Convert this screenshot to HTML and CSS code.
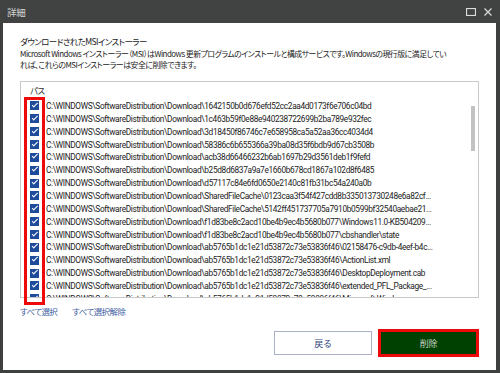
FILE: index.html
```html
<!DOCTYPE html>
<html lang="ja">
<head>
<meta charset="utf-8">
<link rel="stylesheet" href="styles.css">
</head>
<body>
<div class="window">
  <div class="titlebar">
    <span class="title">詳細</span>
    <span class="controls">
      <svg class="ico" width="10" height="8" viewBox="0 0 10 8"><rect x="0.5" y="0.5" width="9" height="7" fill="none" stroke="#dcdcdc" stroke-width="1.2"/></svg>
      <svg class="ico" width="8" height="8" viewBox="0 0 8 8"><path d="M0.5 0.5L7.5 7.5M7.5 0.5L0.5 7.5" stroke="#dcdcdc" stroke-width="1.2"/></svg>
    </span>
  </div>
  <div class="content">
    <p class="text">ダウンロードされたMSIインストーラー</p>
    <p class="text desc">Microsoft Windows インストーラー（MSI）はWindows 更新プログラムのインストールと構成サービスです。Windowsの現行版に満足してい<br>れば、これらのMSIインストーラーは安全に削除できます。</p>
    <div class="listbox">
      <div class="list">
        <div class="head">パス</div>
        <div class="row"><span class="cb"></span><span class="path">C:\WINDOWS\SoftwareDistribution\Download\1642150b0d676efd52cc2aa4d0173f6e706c04bd</span></div>
        <div class="row"><span class="cb"></span><span class="path">C:\WINDOWS\SoftwareDistribution\Download\1c463b59f0e88e940238722699b2ba789e932fec</span></div>
        <div class="row"><span class="cb"></span><span class="path">C:\WINDOWS\SoftwareDistribution\Download\3d18450f86746c7e658958ca5a52aa36cc4034d4</span></div>
        <div class="row"><span class="cb"></span><span class="path">C:\WINDOWS\SoftwareDistribution\Download\58386c6b655366a39ba08d35f6bdb9d67cb3508b</span></div>
        <div class="row"><span class="cb"></span><span class="path">C:\WINDOWS\SoftwareDistribution\Download\acb38d66466232b6ab1697b29d3561deb1f9fefd</span></div>
        <div class="row"><span class="cb"></span><span class="path">C:\WINDOWS\SoftwareDistribution\Download\b25d8d6837a9a7e1660b678cd1867a102d8f6485</span></div>
        <div class="row"><span class="cb"></span><span class="path">C:\WINDOWS\SoftwareDistribution\Download\d57117c84e6fd0650e2140c81fb31bc54a240a0b</span></div>
        <div class="row"><span class="cb"></span><span class="path">C:\WINDOWS\SoftwareDistribution\Download\SharedFileCache\0123caa3f54f427cdd8b335013730248e6a82cf...</span></div>
        <div class="row"><span class="cb"></span><span class="path">C:\WINDOWS\SoftwareDistribution\Download\SharedFileCache\5142ff451737705a7910b0599bf32540aebae21...</span></div>
        <div class="row"><span class="cb"></span><span class="path">C:\WINDOWS\SoftwareDistribution\Download\f1d83be8c2acd10be4b9ec4b5680b077\Windows11.0-KB504209...</span></div>
        <div class="row"><span class="cb"></span><span class="path">C:\WINDOWS\SoftwareDistribution\Download\f1d83be8c2acd10be4b9ec4b5680b077\cbshandler\state</span></div>
        <div class="row"><span class="cb"></span><span class="path">C:\WINDOWS\SoftwareDistribution\Download\ab5765b1dc1e21d53872c73e53836f46\02158476-c9db-4eef-b4c...</span></div>
        <div class="row"><span class="cb"></span><span class="path">C:\WINDOWS\SoftwareDistribution\Download\ab5765b1dc1e21d53872c73e53836f46\ActionList.xml</span></div>
        <div class="row"><span class="cb"></span><span class="path">C:\WINDOWS\SoftwareDistribution\Download\ab5765b1dc1e21d53872c73e53836f46\DesktopDeployment.cab</span></div>
        <div class="row"><span class="cb"></span><span class="path">C:\WINDOWS\SoftwareDistribution\Download\ab5765b1dc1e21d53872c73e53836f46\extended_PFL_Package_...</span></div>
        <div class="row"><span class="cb"></span><span class="path">C:\WINDOWS\SoftwareDistribution\Download\ab5765b1dc1e21d53872c73e53836f46\Microsoft.Windows...</span></div>
      </div>
      <div class="track"><div class="thumb"></div></div>
    </div>
    <div class="links">
      <a class="link">すべて選択</a>
      <a class="link">すべて選択解除</a>
    </div>
    <div class="buttons">
      <button class="btn back">戻る</button>
      <button class="btn delete">削除</button>
    </div>
  </div>
  <div class="highlight"></div>
</div>
</body>
</html>
```

FILE: styles.css
```css
html, body {
  margin: 0;
  padding: 0;
}
body {
  width: 500px;
  height: 373px;
  background: #3e4040;
  overflow: hidden;
  font-family: "Noto Sans CJK JP", "Noto Sans", sans-serif;
  font-feature-settings: "palt";
}
.window {
  position: relative;
  width: 500px;
  height: 373px;
  display: flex;
  flex-direction: column;
}
.titlebar {
  height: 23px;
  flex: none;
  display: flex;
  align-items: center;
  justify-content: space-between;
  padding: 0 7px;
  background: #414242;
  color: #d4d4d4;
}
.title {
  font-size: 9.5px;
  line-height: 12px;
  letter-spacing: -0.3px;
}
.controls {
  display: flex;
  align-items: center;
  gap: 8px;
  padding-right: 1px;
}
.ico {
  display: block;
}
.content {
  flex: 1;
  background: #ffffff;
  margin: 0 4px 3px 3px;
  padding: 13px 17px 0 17px;
  display: flex;
  flex-direction: column;
  color: #222222;
}
.text {
  margin: 0;
  font-size: 8.5px;
  letter-spacing: -0.6px;
  line-height: 11.5px;
  white-space: nowrap;
}
.desc {
  font-size: 7.9px;
  letter-spacing: -0.5px;
}
.listbox {
  margin-top: 10.5px;
  height: 217px;
  width: 459px;
  box-sizing: border-box;
  border: 1.5px solid #c9c9c9;
  display: flex;
  overflow: hidden;
}
.list {
  flex: 1;
  min-width: 0;
  padding-left: 9px;
}
.head {
  height: 17.5px;
  padding-top: 2px;
  box-sizing: border-box;
  font-size: 8.5px;
  letter-spacing: -0.5px;
  line-height: 12px;
  color: #333333;
}
.row {
  height: 12.86px;
  display: flex;
  align-items: center;
  gap: 7px;
}
.cb {
  position: relative;
  flex: none;
  width: 9px;
  height: 9px;
  background: #1e4b9a;
}
.cb::after {
  content: "";
  position: absolute;
  left: 2px;
  top: 1.6px;
  width: 4.5px;
  height: 2.2px;
  border-left: 1.3px solid #ffffff;
  border-bottom: 1.3px solid #ffffff;
  transform: rotate(-45deg);
}
.path {
  font-family: Roboto, "Noto Sans", sans-serif;
  font-size: 8.3px;
  letter-spacing: -0.35px;
  line-height: 12px;
  white-space: nowrap;
  overflow: hidden;
  text-overflow: ellipsis;
  color: #222222;
  padding-right: 6px;
}
.track {
  flex: none;
  width: 4px;
  margin: 0 3px 0 4px;
}
.thumb {
  margin-top: 24px;
  height: 45px;
  background: #c2c2c2;
}
.links {
  margin-top: 7px;
  display: flex;
  gap: 15px;
}
.link {
  font-size: 8.5px;
  letter-spacing: -0.6px;
  line-height: 12px;
  color: #3d5c9e;
}
.buttons {
  margin-top: 12px;
  display: flex;
  justify-content: flex-end;
  align-items: center;
  gap: 6px;
}
.btn {
  font-family: "Noto Sans CJK JP", sans-serif;
  font-size: 9px;
  letter-spacing: -0.3px;
  margin: 0;
  padding: 0;
  box-sizing: border-box;
}
.back {
  width: 98px;
  height: 24px;
  background: #ffffff;
  border: 1px solid #aab1c6;
  color: #2e3f78;
}
.delete {
  width: 101px;
  height: 28px;
  background: #004000;
  border: 3px solid #ee0a0a;
  color: #c9d2c9;
}
.highlight {
  position: absolute;
  left: 24px;
  top: 97px;
  width: 21px;
  height: 208px;
  box-sizing: border-box;
  border: 3px solid #ee0a0a;
  pointer-events: none;
}
```
